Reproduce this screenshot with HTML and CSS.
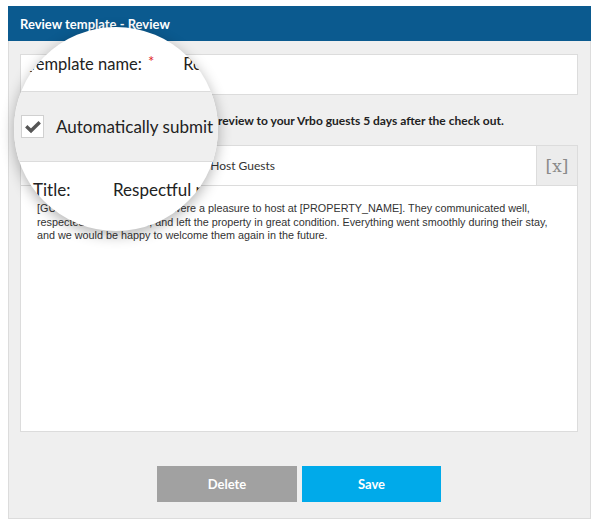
FILE: index.html
```html
<!DOCTYPE html>
<html>
<head>
<meta charset="utf-8">
<link rel="stylesheet" href="styles.css">
</head>
<body>
<div class="page">
  <div class="dialog">
    <div class="dialog-header">Review template - Review</div>
    <div class="dialog-body">
      <div class="name-field">
        <span class="name-label">Template name:</span><span class="req">*</span><span class="name-value">Review</span>
      </div>
      <div class="auto-row">
        <span class="auto-check"></span>
        <span class="auto-label"><span class="auto-lead">Automatically submit</span>review to your Vrbo guests 5 days after the check out.</span>
      </div>
      <div class="editor">
        <div class="editor-toolbar">
          <div class="title-field"><span class="title-label">Title:</span><span class="title-value">Respectful review for Host Guests</span></div>
          <div class="var-btn">[x]</div>
        </div>
        <div class="editor-body">
          [GUEST_NAME] and family were a pleasure to host at [PROPERTY_NAME]. They communicated well,<br>
          respected the premises, and left the property in great condition. Everything went smoothly during their stay,<br>
          and we would be happy to welcome them again in the future.
        </div>
      </div>
      <div class="actions">
        <button class="btn btn-delete">Delete</button>
        <button class="btn btn-save">Save</button>
      </div>
    </div>
  </div>

  <div class="lens">
    <div class="lens-name">
      <span class="lens-name-label">Template name:</span><span class="lens-req">*</span><span class="lens-name-value">Review</span>
    </div>
    <div class="lens-auto">
      <span class="lens-check">
        <svg width="16" height="14" viewBox="0 0 16 14"><path d="M2.5 7.5 L6 10.8 L13.5 3.5" fill="none" stroke="#555" stroke-width="3.4" stroke-linecap="square"/></svg>
      </span>
      <span class="lens-auto-text">Automatically submit</span>
    </div>
    <div class="lens-title">
      <span class="lens-title-label">Title:</span><span class="lens-title-value">Respectful review</span>
    </div>
  </div>
</div>
</body>
</html>
```

FILE: styles.css
```css
* { box-sizing: border-box; }

body {
  margin: 0;
  background: #fff;
  font-family: Lato, "Open Sans", sans-serif;
  color: #222;
}

.page {
  position: relative;
  width: 600px;
  height: 528px;
  padding: 6px 9px 0 8px;
  overflow: hidden;
}

.dialog { width: 583px; }

.dialog-header {
  height: 35px;
  background: #0b5a8f;
  color: #fff;
  font-weight: 700;
  font-size: 13px;
  display: flex;
  align-items: center;
  padding-left: 12px;
}

.dialog-body {
  height: 478px;
  background: #efefef;
  border: 1px solid #dcdcdc;
  border-top: 0;
  padding: 13px 12px 0 11px;
}

.name-field {
  height: 41px;
  background: #fff;
  border: 1px solid #dcdcdc;
  display: flex;
  align-items: center;
  padding-left: 9px;
  font-size: 12px;
}
.req { color: #e02424; margin: 0 10px 0 5px; }

.auto-row {
  height: 50px;
  display: flex;
  align-items: center;
}
.auto-check {
  width: 13px;
  height: 13px;
  background: #fff;
  border: 1px solid #ccc;
}
.auto-label {
  margin-left: 8px;
  font-size: 12px;
  font-weight: 700;
  color: #222;
}
.auto-lead {
  display: inline-block;
  width: 177px;
}

.editor {
  height: 287px;
  background: #fff;
  border: 1px solid #dcdcdc;
  display: flex;
  flex-direction: column;
}
.editor-toolbar {
  height: 40px;
  display: flex;
  border-bottom: 1px solid #dcdcdc;
}
.title-field {
  flex: 1;
  display: flex;
  align-items: center;
  padding-left: 12px;
  font-size: 12px;
  color: #333;
}
.title-label { width: 63px; }
.var-btn {
  width: 41px;
  background: #ececec;
  border-left: 1px solid #dcdcdc;
  display: flex;
  align-items: center;
  justify-content: center;
  font-family: "DejaVu Serif", serif;
  font-size: 17px;
  color: #8a8a8a;
}
.editor-body {
  padding: 16px 16px 0;
  font-family: "Liberation Sans", Arial, sans-serif;
  font-size: 10.8px;
  line-height: 13.5px;
  color: #333;
}

.actions {
  display: flex;
  justify-content: center;
  gap: 5px;
  margin-top: 34px;
}
.btn {
  width: 140px;
  height: 36px;
  border: 0;
  color: #fff;
  font-family: Lato, sans-serif;
  font-weight: 700;
  font-size: 13px;
}
.btn-delete { background: #a1a1a1; }
.btn-save { background: #00aaea; width: 139px; }

/* magnifier lens overlay */
.lens {
  position: absolute;
  left: 14px;
  top: 27px;
  width: 204px;
  height: 204px;
  border-radius: 50%;
  overflow: hidden;
  background: #fff;
  box-shadow: 0 4px 14px rgba(0, 0, 0, 0.3);
  font-family: Lato, "Open Sans", sans-serif;
  font-size: 17px;
  color: #222;
}
.lens-name {
  height: 65px;
  border-bottom: 1px solid #dcdcdc;
  padding: 24px 0 0 14px;
  line-height: 20px;
  font-size: 16.5px;
  white-space: nowrap;
}
.lens-req {
  color: #e02424;
  font-size: 15px;
  vertical-align: 3px;
  margin-left: 6px;
}
.lens-name-value { margin-left: 29px; }
.lens-auto {
  height: 70px;
  background: #efefef;
  border-bottom: 1px solid #dcdcdc;
  display: flex;
  align-items: center;
  padding-left: 7px;
  gap: 12px;
  white-space: nowrap;
}
.lens-check {
  width: 23px;
  height: 23px;
  background: #fff;
  border: 1px solid #d0d0d0;
  display: flex;
  align-items: center;
  justify-content: center;
  flex: none;
}
.lens-title {
  padding: 18px 0 0 19px;
  line-height: 20px;
  display: flex;
  white-space: nowrap;
}
.lens-title-label { width: 80px; flex: none; }
```
